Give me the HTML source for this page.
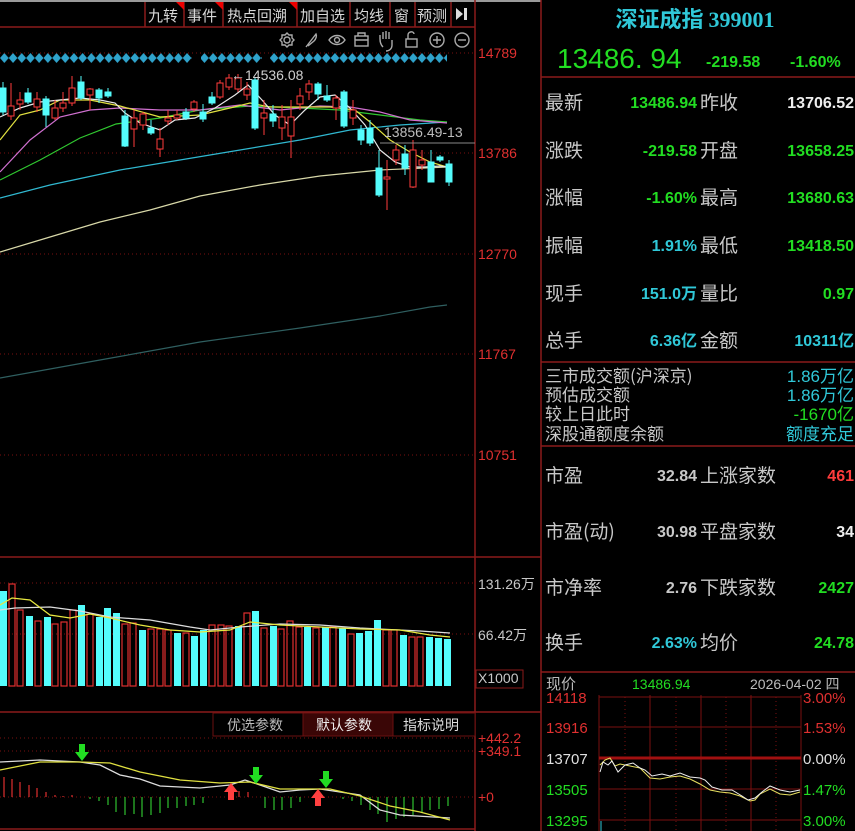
<!DOCTYPE html>
<html><head><meta charset="utf-8"><style>
html,body{margin:0;padding:0;background:#000;width:855px;height:831px;overflow:hidden}
svg{display:block}
text{font-family:"Liberation Sans","Noto Sans CJK SC",sans-serif}
.cn{font-family:"Noto Sans CJK SC","WenQuanYi Zen Hei",sans-serif}
</style></head><body>
<svg width="855" height="831" viewBox="0 0 855 831" xmlns="http://www.w3.org/2000/svg">
<defs>
<pattern id="dia" x="0" y="52" width="8.7" height="12" patternUnits="userSpaceOnUse">
<path d="M4.35 1 L8.7 6 L4.35 11 L0 6Z" fill="#2fa3cc"/></pattern>
</defs>
<rect width="855" height="831" fill="#000"/>
<rect x="0" y="0" width="541" height="2" fill="#9a9a9a"/>
<!-- toolbar -->
<g stroke="#8b1a1a" stroke-width="1.5" fill="none">
<line x1="0" y1="27" x2="475" y2="27"/>
<line x1="145" y1="2" x2="145" y2="27"/><line x1="184" y1="2" x2="184" y2="27"/>
<line x1="223" y1="2" x2="223" y2="27"/><line x1="297" y1="2" x2="297" y2="27"/>
<line x1="350" y1="2" x2="350" y2="27"/><line x1="390" y1="2" x2="390" y2="27"/>
<line x1="415" y1="2" x2="415" y2="27"/><line x1="451" y1="2" x2="451" y2="27"/>
</g>
<g fill="#e00"><path d="M176 2h8v8z"/><path d="M215 2h8v8z"/><path d="M289 2h8v8z"/></g>
<g class="cn" fill="#d8d8d8" font-size="15">
<text x="148" y="21" class="cn">九转</text><text x="187" y="21" class="cn">事件</text>
<text x="227" y="21" class="cn">热点回溯</text><text x="300" y="21" class="cn">加自选</text>
<text x="354" y="21" class="cn">均线</text><text x="394" y="21" class="cn">窗</text>
<text x="417" y="21" class="cn">预测</text></g>
<path d="M456 8v12l7-6z M464 8h3v12h-3z" fill="#ddd"/>
<!-- icons -->
<g stroke="#aaa" stroke-width="1.4" fill="none">
<circle cx="287" cy="40" r="3"/><path d="M287 33l2 2 3 0 0 3 2 2-2 2 0 3-3 0-2 2-2-2-3 0 0-3-2-2 2-2 0-3 3 0z"/>
<path d="M306 47l10-13c1 2 0 5-2 7l-6 5"/>
<path d="M329 40c4-6 12-6 16 0c-4 6-12 6-16 0z"/><circle cx="337" cy="40" r="2.5"/>
<rect x="355" y="36" width="13" height="10"/><path d="M358 36v-3h7v3M355 40h13"/>
<path d="M383 47c-3-3-3-6-3-8v-4m3 4v-7m3 7v-8m3 8v-7m3 8v5c0 4-3 6-6 6"/>
<rect x="406" y="39" width="11" height="8"/><path d="M408 39v-4c0-4 6-4 6-1"/>
<circle cx="437" cy="40" r="7"/><path d="M433 40h8M437 36v8"/>
<circle cx="462" cy="40" r="7"/><path d="M458 40h8"/>
</g>
<rect x="0" y="52" width="192" height="12" fill="url(#dia)"/>
<rect x="201" y="52" width="61" height="12" fill="url(#dia)"/>
<rect x="270" y="52" width="177" height="12" fill="url(#dia)"/>
<!-- grid -->
<g stroke="#7a1010" stroke-width="1" stroke-dasharray="1,3">
<line x1="0" y1="53" x2="475" y2="53"/><line x1="0" y1="153" x2="475" y2="153"/>
<line x1="0" y1="254" x2="475" y2="254"/><line x1="0" y1="354" x2="475" y2="354"/>
<line x1="0" y1="455" x2="475" y2="455"/>
<line x1="0" y1="583" x2="475" y2="583"/><line x1="0" y1="634" x2="475" y2="634"/>
<line x1="0" y1="738" x2="475" y2="738"/><line x1="0" y1="751" x2="475" y2="751"/>
<line x1="0" y1="797" x2="475" y2="797"/>
</g>
<g stroke="#8b1a1a" stroke-width="1.5">
<line x1="475" y1="0" x2="475" y2="831"/><line x1="541" y1="0" x2="541" y2="831"/>
<line x1="0" y1="557" x2="541" y2="557"/><line x1="0" y1="712" x2="541" y2="712"/>
<line x1="0" y1="829" x2="475" y2="829"/>
<line x1="541" y1="77" x2="855" y2="77"/><line x1="541" y1="362" x2="855" y2="362"/>
<line x1="541" y1="446" x2="855" y2="446"/><line x1="541" y1="672" x2="855" y2="672"/>
</g>
<g fill="#e03030" font-size="14">
<text x="478" y="58">14789</text><text x="478" y="158">13786</text><text x="478" y="259">12770</text>
<text x="478" y="359">11767</text><text x="478" y="460">10751</text>
<text x="478" y="743">+442.2</text><text x="478" y="756">+349.1</text><text x="478" y="802">+0</text>
</g>
<g fill="#c8c8c8" font-size="14"><text x="478" y="589">131.26万</text><text x="478" y="640">66.42万</text>
<text x="478" y="683">X1000</text></g>
<rect x="476" y="670" width="47" height="18" fill="none" stroke="#8b1a1a"/>
<!-- MA lines -->
<g fill="none" stroke-width="1.2">
<polyline stroke="#2f5f60" points="0,378 100,360 200,342 300,328 380,316 430,307 447,305"/>
<polyline stroke="#d8d8a8" points="0,252 50,237 100,222 150,210 200,196 260,185 320,176 380,170 447,167"/>
<polyline stroke="#30b8d0" points="0,198 50,185 120,170 180,160 240,150 300,140 350,130 400,125 447,122"/>
<polyline stroke="#30c830" points="0,180 40,160 80,138 116,124 160,118 200,110 250,106 300,108 340,110 380,115 420,120 447,122"/>
<polyline stroke="#d070d0" points="0,172 30,140 60,117 90,110 120,108 160,110 200,110 240,105 280,110 320,106 350,107 380,112 410,120 447,123"/>
<polyline stroke="#e0e040" points="0,140 20,115 40,110 60,100 90,100 120,106 160,117 200,115 230,108 250,103 270,107 300,107 330,107 355,110 370,122 390,140 410,152 430,162 447,167"/>
<polyline stroke="#e8e8e8" points="0,117 20,108 40,102 60,100 80,98 100,100 115,103 125,113 140,123 160,130 175,120 195,118 215,108 235,95 248,85 262,100 275,115 290,125 305,110 320,97 335,95 350,108 365,125 380,150 395,162 410,167 425,167 440,166 447,167"/>
</g>
<!-- candles cyan -->
<g stroke="#54fcfc" fill="#54fcfc">
<line x1="3" y1="82" x2="3" y2="115"/><rect x="0" y="88" width="6" height="24"/>
<line x1="28" y1="88" x2="28" y2="104"/><rect x="25" y="93" width="6" height="9"/>
<line x1="46" y1="96" x2="46" y2="127"/><rect x="43" y="99" width="6" height="16"/>
<line x1="81" y1="76" x2="81" y2="100"/><rect x="78" y="82" width="6" height="16"/>
<line x1="99" y1="88" x2="99" y2="103"/><rect x="96" y="90" width="6" height="8"/>
<line x1="108" y1="88" x2="108" y2="98"/><rect x="105" y="92" width="6" height="4"/>
<line x1="125" y1="110" x2="125" y2="147"/><rect x="122" y="116" width="6" height="30"/>
<line x1="151" y1="120" x2="151" y2="135"/><rect x="148" y="128" width="6" height="5"/>
<line x1="186" y1="108" x2="186" y2="120"/><rect x="183" y="112" width="6" height="6"/>
<line x1="203" y1="104" x2="203" y2="122"/><rect x="200" y="112" width="6" height="7"/>
<line x1="212" y1="92" x2="212" y2="105"/><rect x="209" y="97" width="6" height="6"/>
<line x1="255" y1="78" x2="255" y2="130"/><rect x="252" y="80" width="6" height="48"/>
<line x1="273" y1="105" x2="273" y2="127"/><rect x="270" y="114" width="6" height="7"/>
<line x1="318" y1="82" x2="318" y2="100"/><rect x="315" y="84" width="6" height="10"/>
<line x1="327" y1="85" x2="327" y2="102"/><rect x="324" y="96" width="6" height="4"/>
<line x1="344" y1="90" x2="344" y2="128"/><rect x="341" y="92" width="6" height="34"/>
<line x1="361" y1="125" x2="361" y2="145"/><rect x="358" y="130" width="6" height="10"/>
<line x1="370" y1="120" x2="370" y2="146"/><rect x="367" y="128" width="6" height="15"/>
<line x1="379" y1="150" x2="379" y2="197"/><rect x="376" y="168" width="6" height="27"/>
<line x1="405" y1="145" x2="405" y2="175"/><rect x="402" y="154" width="6" height="14"/>
<line x1="431" y1="150" x2="431" y2="182"/><rect x="428" y="162" width="6" height="20"/>
<line x1="440" y1="155" x2="440" y2="162"/><rect x="437" y="157" width="6" height="3"/>
<line x1="449" y1="160" x2="449" y2="186"/><rect x="446" y="164" width="6" height="18"/>
</g>
<g stroke="#ff3c3c" fill="#000">
<line x1="11" y1="83" x2="11" y2="120"/><rect x="8" y="106" width="6" height="10"/>
<line x1="20" y1="92" x2="20" y2="110"/><rect x="17" y="100" width="6" height="4"/>
<line x1="37" y1="92" x2="37" y2="112"/><rect x="34" y="99" width="6" height="8"/>
<line x1="55" y1="100" x2="55" y2="120"/><rect x="52" y="108" width="6" height="10"/>
<line x1="63" y1="92" x2="63" y2="112"/><rect x="60" y="103" width="6" height="5"/>
<line x1="72" y1="76" x2="72" y2="106"/><rect x="69" y="88" width="6" height="15"/>
<line x1="90" y1="88" x2="90" y2="110"/><rect x="87" y="89" width="6" height="6"/>
<line x1="134" y1="110" x2="134" y2="147"/><rect x="131" y="118" width="6" height="11"/>
<line x1="143" y1="112" x2="143" y2="130"/><rect x="140" y="114" width="6" height="11"/>
<line x1="160" y1="128" x2="160" y2="157"/><rect x="157" y="139" width="6" height="10"/>
<line x1="168" y1="110" x2="168" y2="125"/><rect x="165" y="118" width="6" height="3"/>
<line x1="177" y1="110" x2="177" y2="120"/><rect x="174" y="115" width="6" height="3"/>
<line x1="194" y1="100" x2="194" y2="112"/><rect x="191" y="102" width="6" height="7"/>
<line x1="220" y1="80" x2="220" y2="99"/><rect x="217" y="83" width="6" height="14"/>
<line x1="229" y1="74" x2="229" y2="90"/><rect x="226" y="78" width="6" height="9"/>
<line x1="238" y1="74" x2="238" y2="92"/><rect x="235" y="78" width="6" height="11"/>
<line x1="247" y1="82" x2="247" y2="100"/><rect x="244" y="89" width="6" height="6"/>
<line x1="264" y1="100" x2="264" y2="135"/><rect x="261" y="113" width="6" height="5"/>
<line x1="282" y1="105" x2="282" y2="140"/><rect x="279" y="117" width="6" height="11"/>
<line x1="291" y1="100" x2="291" y2="158"/><rect x="288" y="117" width="6" height="19"/>
<line x1="300" y1="88" x2="300" y2="110"/><rect x="297" y="96" width="6" height="8"/>
<line x1="309" y1="80" x2="309" y2="100"/><rect x="306" y="84" width="6" height="8"/>
<line x1="336" y1="95" x2="336" y2="120"/><rect x="333" y="98" width="6" height="10"/>
<line x1="353" y1="100" x2="353" y2="125"/><rect x="350" y="110" width="6" height="8"/>
<line x1="387" y1="160" x2="387" y2="210"/><rect x="384" y="177" width="6" height="2"/>
<line x1="396" y1="145" x2="396" y2="165"/><rect x="393" y="150" width="6" height="10"/>
<line x1="413" y1="140" x2="413" y2="188"/><rect x="410" y="150" width="6" height="37"/>
<line x1="422" y1="150" x2="422" y2="170"/><rect x="419" y="160" width="6" height="5"/>
</g>
<line x1="380" y1="143" x2="475" y2="143" stroke="#888"/>
<text x="231" y="80" fill="#cfcfcf" font-size="14">←14536.08</text>
<text x="384" y="137" fill="#bdbdbd" font-size="14">13856.49-13</text>
<!-- volume bars -->
<g fill="#54fcfc">
<rect x="0" y="591" width="7" height="95"/><rect x="26" y="616" width="7" height="70"/><rect x="44" y="617" width="7" height="69"/>
<rect x="78" y="605" width="7" height="81"/><rect x="96" y="617" width="7" height="69"/><rect x="104" y="608" width="7" height="78"/>
<rect x="113" y="613" width="7" height="73"/><rect x="139" y="630" width="7" height="56"/><rect x="174" y="633" width="7" height="53"/>
<rect x="191" y="636" width="7" height="50"/><rect x="200" y="630" width="7" height="56"/><rect x="235" y="626" width="7" height="60"/>
<rect x="252" y="611" width="7" height="75"/><rect x="270" y="626" width="7" height="60"/><rect x="304" y="627" width="7" height="59"/>
<rect x="322" y="627" width="7" height="59"/><rect x="339" y="628" width="7" height="58"/><rect x="356" y="633" width="7" height="53"/>
<rect x="365" y="631" width="7" height="55"/><rect x="374" y="620" width="7" height="66"/><rect x="400" y="635" width="7" height="51"/>
<rect x="426" y="637" width="7" height="49"/><rect x="435" y="638" width="7" height="48"/><rect x="444" y="639" width="7" height="47"/>
</g>
<g fill="none" stroke="#e03030" stroke-width="1.2">
<rect x="9" y="584" width="6" height="102"/><rect x="17" y="610" width="6" height="76"/><rect x="35" y="621" width="6" height="65"/>
<rect x="52" y="624" width="6" height="62"/><rect x="61" y="622" width="6" height="64"/><rect x="70" y="610" width="6" height="76"/>
<rect x="87" y="614" width="6" height="72"/><rect x="122" y="624" width="6" height="62"/><rect x="130" y="623" width="6" height="63"/>
<rect x="148" y="629" width="6" height="57"/><rect x="157" y="629" width="6" height="57"/><rect x="165" y="630" width="6" height="56"/>
<rect x="183" y="633" width="6" height="53"/><rect x="209" y="625" width="6" height="61"/><rect x="218" y="625" width="6" height="61"/>
<rect x="226" y="626" width="6" height="60"/><rect x="244" y="613" width="6" height="73"/><rect x="261" y="628" width="6" height="58"/>
<rect x="278" y="629" width="6" height="57"/><rect x="287" y="621" width="6" height="65"/><rect x="296" y="627" width="6" height="59"/>
<rect x="313" y="628" width="6" height="58"/><rect x="330" y="627" width="6" height="59"/><rect x="348" y="634" width="6" height="52"/>
<rect x="383" y="630" width="6" height="56"/><rect x="391" y="630" width="6" height="56"/><rect x="409" y="637" width="6" height="49"/>
<rect x="417" y="637" width="6" height="49"/>
</g>
<g fill="none" stroke-width="1.2">
<polyline stroke="#ddd" points="0,610 15,608 50,607 80,611 110,617 150,620 190,627 210,630 240,627 280,624 320,625 360,628 420,631 450,633"/>
<polyline stroke="#e8e840" points="0,605 12,598 30,600 50,615 70,618 90,614 110,618 140,625 170,630 200,632 230,630 250,622 280,625 320,627 360,629 400,630 430,635 450,637"/>
</g>
<!-- MACD buttons -->
<rect x="213" y="713" width="90" height="23" fill="#000" stroke="#6b1010"/>
<rect x="303" y="713" width="90" height="23" fill="#3a0606" stroke="#6b1010"/>
<rect x="393" y="713" width="82" height="23" fill="#000" stroke="#6b1010"/>
<g font-size="14" class="cn"><text x="227" y="730" fill="#bbb" class="cn">优选参数</text>
<text x="316" y="730" fill="#eee" class="cn">默认参数</text><text x="403" y="730" fill="#ddd" class="cn">指标说明</text></g>
<!-- MACD histogram -->
<g stroke="#e03030" stroke-width="1.2">
<line x1="4" y1="797" x2="4" y2="777"/><line x1="12" y1="797" x2="12" y2="779"/><line x1="20" y1="797" x2="20" y2="782"/>
<line x1="29" y1="797" x2="29" y2="785"/><line x1="37" y1="797" x2="37" y2="788"/><line x1="46" y1="797" x2="46" y2="792"/>
<line x1="55" y1="797" x2="55" y2="795"/><line x1="63" y1="797" x2="63" y2="796"/><line x1="72" y1="797" x2="72" y2="795"/>
<line x1="239" y1="797" x2="239" y2="791"/><line x1="248" y1="797" x2="248" y2="792"/>
</g>
<g stroke="#30c030" stroke-width="1.2">
<line x1="90" y1="797" x2="90" y2="799"/><line x1="99" y1="797" x2="99" y2="801"/><line x1="108" y1="797" x2="108" y2="805"/>
<line x1="116" y1="797" x2="116" y2="812"/><line x1="125" y1="797" x2="125" y2="815"/><line x1="134" y1="797" x2="134" y2="814"/>
<line x1="142" y1="797" x2="142" y2="817"/><line x1="151" y1="797" x2="151" y2="815"/><line x1="160" y1="797" x2="160" y2="813"/>
<line x1="168" y1="797" x2="168" y2="808"/><line x1="177" y1="797" x2="177" y2="808"/><line x1="186" y1="797" x2="186" y2="806"/>
<line x1="194" y1="797" x2="194" y2="805"/><line x1="203" y1="797" x2="203" y2="803"/>
<line x1="265" y1="797" x2="265" y2="808"/><line x1="274" y1="797" x2="274" y2="810"/><line x1="282" y1="797" x2="282" y2="810"/>
<line x1="291" y1="797" x2="291" y2="808"/><line x1="300" y1="797" x2="300" y2="802"/>
<line x1="343" y1="797" x2="343" y2="799"/><line x1="352" y1="797" x2="352" y2="801"/><line x1="361" y1="797" x2="361" y2="805"/>
<line x1="370" y1="797" x2="370" y2="810"/><line x1="378" y1="797" x2="378" y2="814"/><line x1="387" y1="797" x2="387" y2="822"/>
<line x1="396" y1="797" x2="396" y2="819"/><line x1="404" y1="797" x2="404" y2="817"/><line x1="413" y1="797" x2="413" y2="815"/>
<line x1="422" y1="797" x2="422" y2="812"/><line x1="430" y1="797" x2="430" y2="810"/><line x1="439" y1="797" x2="439" y2="809"/>
<line x1="448" y1="797" x2="448" y2="806"/>
</g>
<g fill="none" stroke-width="1.3">
<polyline stroke="#ddd" points="0,762 40,760 80,762 100,765 120,775 140,779 160,786 200,788 230,785 245,780 260,785 280,792 300,790 320,789 360,795 380,810 400,815 450,818"/>
<polyline stroke="#e0e040" points="0,770 40,762 80,762 110,763 140,772 180,780 220,783 250,782 280,789 330,789 360,796 390,806 420,812 450,820"/>
</g>
<g fill="#22dd22"><path d="M79 744h6v8h4l-7 9-7-9h4z"/><path d="M253 767h6v8h4l-7 9-7-9h4z"/><path d="M323 771h6v8h4l-7 9-7-9h4z"/></g>
<g fill="#ff4040"><path d="M231 783l7 9h-4v8h-6v-8h-4z"/><path d="M318 789l7 9h-4v8h-6v-8h-4z"/></g>

<!-- RIGHT PANEL -->
<text x="695" y="27" text-anchor="middle" fill="#30c8d8" font-size="22" font-weight="bold" class="cn">深证成指 <tspan font-family="Liberation Serif" font-weight="bold">399001</tspan></text>
<text x="557" y="68" fill="#22dd22" font-size="28" font-family="Liberation Serif">13486. 94</text>
<text x="706" y="67" fill="#22dd22" font-size="16" font-weight="bold">-219.58</text>
<text x="790" y="67" fill="#22dd22" font-size="16" font-weight="bold">-1.60%</text>
<g class="cn" fill="#c8c8c8" font-size="19">
<text x="545" y="109" class="cn">最新</text><text x="545" y="157" class="cn">涨跌</text><text x="545" y="204" class="cn">涨幅</text>
<text x="545" y="252" class="cn">振幅</text><text x="545" y="300" class="cn">现手</text><text x="545" y="347" class="cn">总手</text>
<text x="700" y="109" class="cn">昨收</text><text x="700" y="157" class="cn">开盘</text><text x="700" y="204" class="cn">最高</text>
<text x="700" y="252" class="cn">最低</text><text x="700" y="300" class="cn">量比</text><text x="700" y="347" class="cn">金额</text>
<text x="545" y="482" class="cn">市盈</text><text x="545" y="538" class="cn">市盈(动)</text><text x="545" y="594" class="cn">市净率</text>
<text x="545" y="649" class="cn">换手</text>
<text x="700" y="482" class="cn">上涨家数</text><text x="700" y="538" class="cn">平盘家数</text><text x="700" y="594" class="cn">下跌家数</text>
<text x="700" y="649" class="cn">均价</text>
</g>
<g font-size="16" font-weight="bold" text-anchor="end">
<text x="697" y="108" fill="#22dd22">13486.94</text><text x="854" y="108" fill="#eee">13706.52</text>
<text x="697" y="156" fill="#22dd22">-219.58</text><text x="854" y="156" fill="#22dd22">13658.25</text>
<text x="697" y="203" fill="#22dd22">-1.60%</text><text x="854" y="203" fill="#22dd22">13680.63</text>
<text x="697" y="251" fill="#30c8d8">1.91%</text><text x="854" y="251" fill="#22dd22">13418.50</text>
<text x="697" y="299" fill="#30c8d8">151.0万</text><text x="854" y="299" fill="#22dd22">0.97</text>
<text x="697" y="346" fill="#30c8d8">6.36亿</text><text x="854" y="346" fill="#30c8d8">10311亿</text>
<text x="697" y="481" fill="#c8c8c8">32.84</text><text x="854" y="481" fill="#ff3c3c">461</text>
<text x="697" y="537" fill="#c8c8c8">30.98</text><text x="854" y="537" fill="#eee">34</text>
<text x="697" y="593" fill="#c8c8c8">2.76</text><text x="854" y="593" fill="#22dd22">2427</text>
<text x="697" y="648" fill="#30c8d8">2.63%</text><text x="854" y="648" fill="#22dd22">24.78</text>
</g>
<g class="cn" fill="#c8c8c8" font-size="17">
<text x="545" y="382" class="cn">三市成交额(沪深京)</text><text x="545" y="401" class="cn">预估成交额</text>
<text x="545" y="420" class="cn">较上日此时</text><text x="545" y="440" class="cn">深股通额度余额</text></g>
<g font-size="17" text-anchor="end">
<text x="854" y="382" fill="#30c8d8">1.86万亿</text><text x="854" y="401" fill="#30c8d8">1.86万亿</text>
<text x="854" y="420" fill="#22dd22">-1670亿</text><text x="854" y="440" fill="#30c8d8" class="cn">额度充足</text></g>
<!-- mini chart -->
<text x="546" y="689" fill="#bbb" font-size="15" class="cn">现价</text>
<text x="632" y="689" fill="#22dd22" font-size="14">13486.94</text>
<text x="750" y="689" fill="#bbb" font-size="14">2026-04-02 <tspan class="cn">四</tspan></text>
<g stroke="#7a1010" stroke-width="1">
<line x1="599" y1="697" x2="801" y2="697"/><line x1="599" y1="727" x2="801" y2="727"/>
<line x1="599" y1="789" x2="801" y2="789"/><line x1="599" y1="820" x2="801" y2="820"/>
<line x1="599" y1="695" x2="599" y2="831"/><line x1="650" y1="695" x2="650" y2="831"/>
<line x1="701" y1="695" x2="701" y2="831"/><line x1="751" y1="695" x2="751" y2="831"/><line x1="801" y1="695" x2="801" y2="831"/>
</g>
<g stroke="#7a1010" stroke-dasharray="1,3"><line x1="625" y1="697" x2="625" y2="831"/><line x1="676" y1="697" x2="676" y2="831"/>
<line x1="726" y1="697" x2="726" y2="831"/><line x1="776" y1="697" x2="776" y2="831"/></g>
<line x1="599" y1="758" x2="801" y2="758" stroke="#a01010" stroke-width="3"/>
<g font-size="15">
<text x="546" y="703" fill="#e03030">14118</text><text x="546" y="733" fill="#e03030">13916</text>
<text x="546" y="764" fill="#e0e0e0">13707</text><text x="546" y="795" fill="#22dd22">13505</text>
<text x="546" y="826" fill="#22dd22">13295</text>
<text x="803" y="703" fill="#e03030">3.00%</text><text x="803" y="733" fill="#e03030">1.53%</text>
<text x="803" y="764" fill="#e0e0e0">0.00%</text><text x="803" y="795" fill="#22dd22">1.47%</text>
<text x="803" y="826" fill="#22dd22">3.00%</text></g>
<g fill="none" stroke-width="1">
<polyline stroke="#e8e060" points="600,765 605,760 610,758 615,766 620,764 630,766 640,768 650,778 660,779 670,777 680,776 690,779 700,784 710,790 720,792 730,793 740,796 750,801 755,800 760,794 770,789 780,794 790,795 800,792"/>
<polyline stroke="#eee" points="600,772 603,762 608,765 612,761 618,772 625,765 633,763 640,768 645,770 652,776 662,774 670,776 680,773 690,777 700,778 705,780 712,787 722,790 732,790 742,796 748,800 755,798 762,792 770,786 780,790 790,792 800,790"/>
</g>
<line x1="601" y1="821" x2="601" y2="831" stroke="#30c8d8"/>
</svg>
</body></html>
